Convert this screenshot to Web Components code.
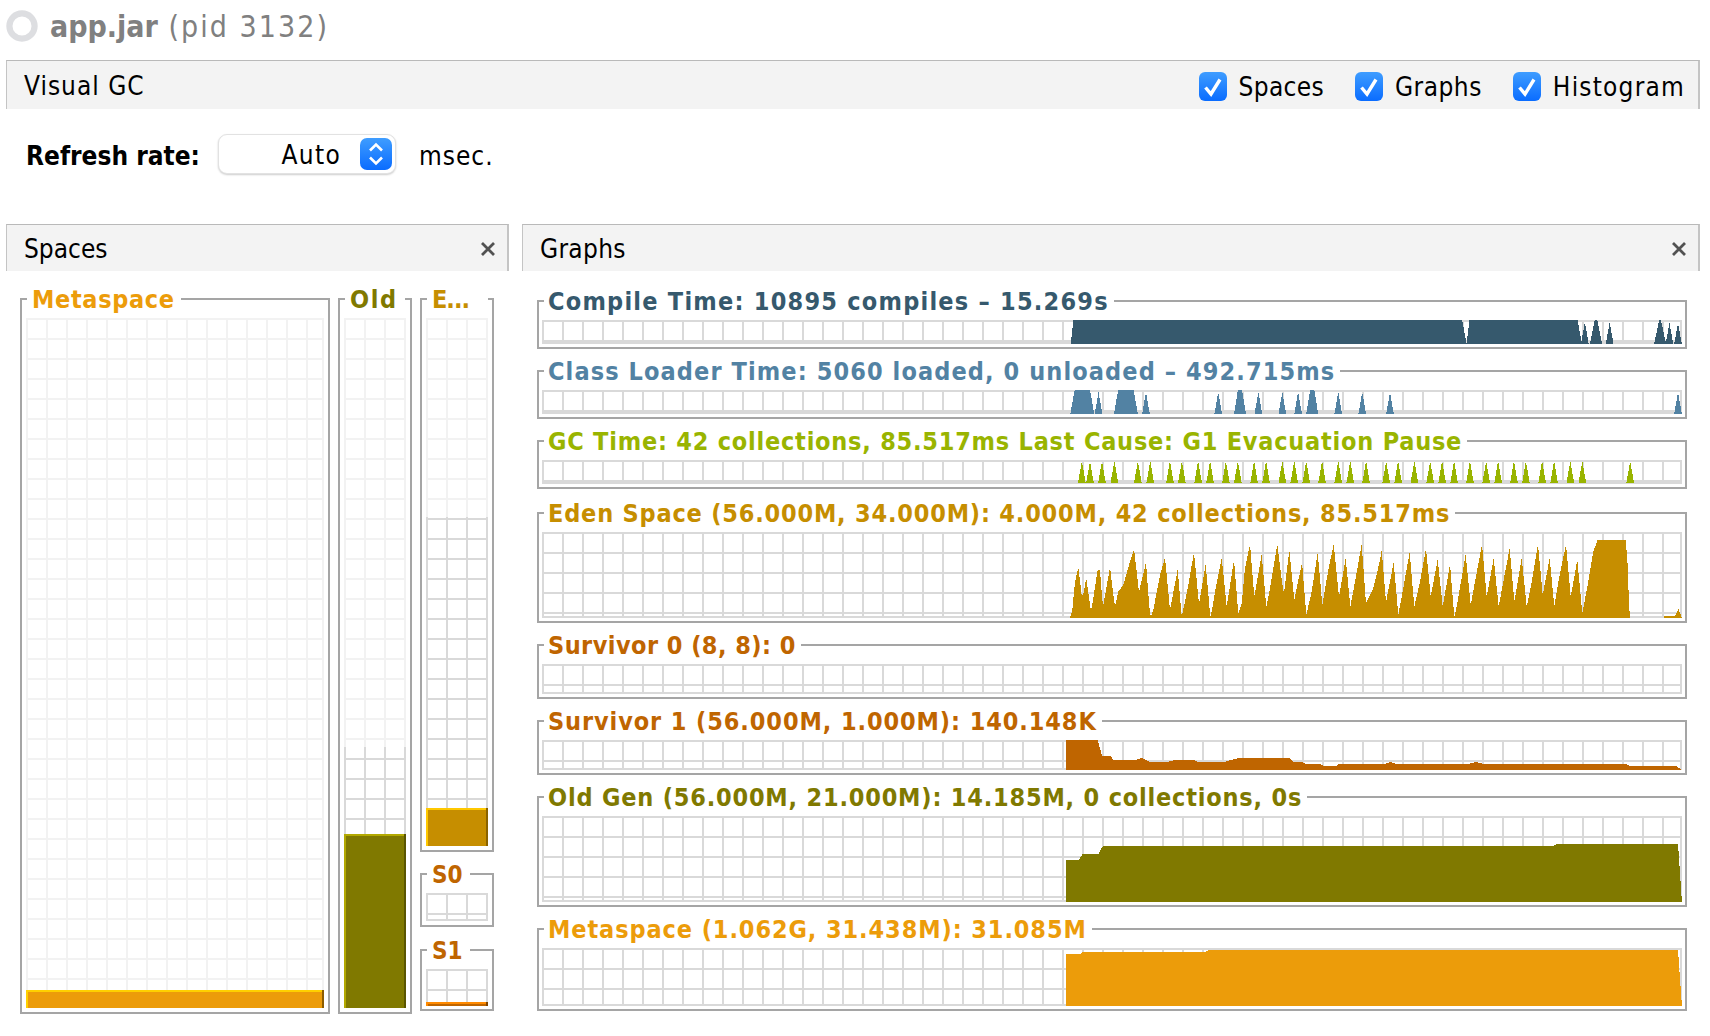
<!DOCTYPE html>
<html lang="en">
<head>
<meta charset="utf-8">
<title>Visual GC</title>
<style>
html,body{margin:0;padding:0;background:#fff}
body{font-family:"DejaVu Sans",sans-serif;font-stretch:condensed;width:1710px;height:1036px;overflow:hidden}
</style>
</head>
<body>
<vgc-app></vgc-app>
<script>
const FONT='"DejaVu Sans",sans-serif';
const zx=x=>+(1040+x/2.34).toFixed(1);
function gridRects(x0,y0,w,h,color,stepX=20,stepY=20,bottom=true,right=true){
  let s='';
  for(let x=x0;x<x0+w-1;x+=stepX)s+=`<rect x="${x}" y="${y0}" width="2" height="${h}"/>`;
  for(let y=y0;y<y0+h-1;y+=stepY)s+=`<rect x="${x0}" y="${y}" width="${w}" height="2"/>`;
  if(right)s+=`<rect x="${x0+w-2}" y="${y0}" width="2" height="${h}"/>`;
  if(bottom)s+=`<rect x="${x0}" y="${y0+h-2}" width="${w}" height="2"/>`;
  return `<g fill="${color}">${s}</g>`;
}
class BaseEl extends HTMLElement{
  constructor(){super();this.attachShadow({mode:'open'});}
}
class AppTitle extends BaseEl{connectedCallback(){this.shadowRoot.innerHTML=`<style>
:host{display:flex;align-items:center;height:60px;padding-left:6px;box-sizing:border-box;color:#808080;font:condensed 30px ${FONT};gap:12px;padding-bottom:8px}
svg{flex:none;width:32px;height:32px}
b{font-weight:700;letter-spacing:0}
span{white-space:pre;letter-spacing:2.05px}
</style><svg viewBox="0 0 32 32"><circle cx="16" cy="16" r="12.6" fill="none" stroke="#dddee1" stroke-width="6.2"/></svg><span><b>app.jar</b> (pid 3132)</span>`;}}
class TabBar extends BaseEl{connectedCallback(){const closable=this.hasAttribute('closable');const ls=this.getAttribute('ls')||0;this.shadowRoot.innerHTML=`<style>
:host{display:flex;align-items:center;box-sizing:border-box;background:#f3f3f3;border-top:1px solid #b9b9b9;border-left:1px solid #c4c4c4;border-right:2px solid #c4c4c4;padding-left:17px;padding-right:11px;font-size:26px;font-stretch:condensed;color:#000;height:var(--tab-h,49px)}
.t{flex:1;letter-spacing:${ls}px;padding-top:2px}
.a{display:flex;align-items:center}
svg{width:16px;height:16px;display:block;margin-top:2px}
</style><div class="t"><slot></slot></div><div class="a"><slot name="actions"></slot>${closable?'<svg viewBox="0 0 16 16"><path d="M2 2L14 14M14 2L2 14" stroke="#515151" stroke-width="2.8" fill="none"/></svg>':''}</div>`;}}
class CheckBox extends BaseEl{connectedCallback(){const ls=this.getAttribute('ls')||0;this.shadowRoot.innerHTML=`<style>
:host{display:inline-flex;align-items:center;gap:12px;font-size:26px;font-stretch:condensed;color:#000}
span{letter-spacing:${ls}px}
i{display:block;width:28px;height:29px;border-radius:6px;background:linear-gradient(#3f9dff,#0a6cff)}
svg{display:block;width:28px;height:29px}
</style><i><svg viewBox="0 0 28 29"><path d="M6.5 15.5L12 22L21 7.5" fill="none" stroke="#fff" stroke-width="3.4"/></svg></i><span><slot></slot></span>`;}}
class SelectBox extends BaseEl{connectedCallback(){this.shadowRoot.innerHTML=`<style>
:host{display:flex;align-items:center;justify-content:flex-end;box-sizing:border-box;width:178px;height:40px;border:1px solid #e2e2e2;border-radius:9px;background:#fff;box-shadow:0 1px 2px rgba(0,0,0,.2);padding-right:3px;gap:19px;font-size:26px;font-stretch:condensed;color:#000}
span{letter-spacing:1.3px;margin-top:1px}
i{display:block;width:32px;height:32px;border-radius:7px;background:linear-gradient(#3f9dff,#0a6cff)}
svg{display:block;width:32px;height:32px}
</style><span><slot></slot></span><i><svg viewBox="0 0 32 32"><path d="M10 12.5L16 6.5L22 12.5M10 19.5L16 25.5L22 19.5" fill="none" stroke="#fff" stroke-width="2.6"/></svg></i>`;}}
class FrameBox extends BaseEl{
  frame(o){
    this.shadowRoot.innerHTML=`<style>
:host{display:block;flex:none;margin-top:${o.mt||0}px}
fieldset{margin:0;min-width:0;box-sizing:border-box;border:2px solid #a5a5a5;padding:${o.pt}px ${o.px}px ${o.pb}px;display:block}
legend{margin-left:${o.ml}px;padding:0 ${o.lr}px 0 ${o.ll}px;height:26px;font:condensed 700 ${o.fs||25}px/28px ${FONT};color:${o.color};white-space:nowrap;letter-spacing:${o.ls||0}px}
svg{display:block}
</style><fieldset><legend>${o.label}</legend>${o.svg}</fieldset>`;
  }
}
class SpaceBox extends FrameBox{connectedCallback(){
  const g=n=>this.getAttribute(n), w=+g('w'), h=+g('h'), solid=+(g('solid')||0), fill=+g('fill'), c=(g('colors')||'').split(',');
  let s='';
  if(solid<h){
    if(solid>0)s+=gridRects(0,0,w,h,'#f2f2f2',20,20,false,true);
    s+=`<svg x="0" y="${solid}" width="${w}" height="${h-solid}" viewBox="0 ${solid} ${w} ${h-solid}">${gridRects(0,0,w,h,'#d9d9d9',20,20,g('bl')!==null,true)}</svg>`;
  }else s+=gridRects(0,0,w,h,'#f2f2f2',20,20,false,true);
  const fy=h-fill;
  if(fill>0)s+=`<rect x="0" y="${fy}" width="${w}" height="${fill}" fill="${c[0]}"/><rect x="0" y="${fy}" width="2" height="${fill}" fill="${c[1]}"/><rect x="0" y="${fy}" width="${w}" height="2" fill="${c[1]}"/><rect x="${w-2}" y="${fy}" width="2" height="${fill}" fill="${c[2]}"/>`;
  this.frame({mt:g('mt'),pt:6,px:4,pb:+(g('pb')||4),ml:1,ll:5,lr:+(g('lr')||6),label:g('label'),color:g('color'),ls:g('ls'),fs:g('fs'),
    svg:`<svg width="${w}" height="${h}" viewBox="0 0 ${w} ${h}" shape-rendering="crispEdges">${s}</svg>`});
}}
const teeth=(list,base,top,hw=9)=>list.map(a=>{
  const [x,t=top,f=0,wd=hw]=Array.isArray(a)?a:[a];
  return [[x-wd,base],[x-f,t],[x+f,t],[x+wd,base]];
});
const edenA=[[15,278],[22,255],[30,170],[40,127],[50,210],[54,212],[64,160],[75,240],[78,258],[85,220],[98,133],[105,135],[112,225],[115,240],[135,127],[147,225],[150,245],[160,200],[175,180],[192,120],[207,72],[222,200],[243,112],[253,245],[257,275],[265,255],[285,150],[300,97],[315,255],[338,133],[350,275],[353,262],[368,190],[387,82],[402,238],[422,118],[436,275],[440,260],[452,190],[470,98],[485,245],[507,105],[520,265],[530,235],[540,130],[555,58],[568,215],[590,88],[604,245],[615,190],[637,57],[652,178],[657,205],[673,75],[688,225],[711,112],[724,270],[740,200],[758,82],[772,240],[790,135],[806,58],[822,215],[842,100],[856,245],[870,170],[890,58],[903,235],[925,190],[945,105]].map(([x,y])=>[1065+x/3,525+y/3]);
const edenB=[[20,75],[33,232],[56,112],[70,270],[80,215],[104,82],[118,245],[135,170],[153,70],[167,215],[188,103],[203,245],[225,118],[238,275],[245,245],[272,88],[287,240],[300,170],[321,58],[335,215],[356,100],[371,245],[385,170],[404,70],[418,230],[440,100],[455,245],[470,170],[489,58],[503,210],[524,100],[538,245],[550,170],[573,58],[587,215],[607,105],[622,265],[640,170],[655,80],[668,45],[752,45],[758,120],[762,240],[765,278]].map(([x,y])=>[1375+x/3,525+y/3]);
const edenC=[[867,278],[868,274],[900,272],[910,252],[921,278]].map(([x,y])=>[1375+x/3,525+y/3]);
const CHARTS={
  compile:{y:320,h:24,color:'#36596d',shapes:[
    [[72,344],[78,320],[988,320],[998,343.5],[1005,320],[1258,320],[1268,344]],
    ...teeth([[1275,322,0,9],[1301,320,3,14],[1333,322,0,9],[1451,320,2,14],[1473,323,0,9],[1493,323,0,9]],344)]},
  classl:{y:390,h:24,color:'#5282a3',shapes:teeth([[99,390,18,28],[137,392,0,9],[201,390,18,28],[248,392,0,9],[417,392,0,9],[468,390,5,14],[511,392,0,9],[567,392,0,9],[604,392,0,9],[637,390,5,14],[698,392,0,9],[754,392,0,9],[819,392,0,9],[1493,392,0,9]],414)},
  gc:{y:461,h:24,color:'#99b400',shapes:teeth([98,117,145,174,229,258,304,332,370,398,435,463,501,529,567,595,623,660,698,726,763,810,838,876,913,941,969,1006,1044,1072,1109,1137,1175,1203,1241,1269,1381],484,462)},
  eden:{y:532,h:86,color:'#c68e00',raw:[[...edenA,...edenB],edenC]},
  s0:{y:664,h:30,color:'#bf6500',shapes:[]},
  s1:{y:740,h:30,color:'#bf6500',zoomY:[630,3],shapes:[
    [[60,419],[60,330],[135,330],[145,378],[165,378],[172,390],[225,390],[238,383],[255,395],[300,395],[315,390],[360,390],[370,396],[430,396],[465,384],[585,384],[592,395],[615,396],[620,401],[655,401],[665,408],[692,408],[700,402],[805,402],[820,396],[835,402],[1000,402],[1020,396],[1040,402],[1370,402],[1380,408],[1490,408],[1500,419]]]},
  old:{y:816,h:86,color:'#807900',zoomY:[630,3],shapes:[
    [[60,816],[60,690],[90,690],[100,672],[137,672],[147,648],[1200,648],[1210,642],[1493,642],[1502,816]]]},
  meta:{y:948,h:58,color:'#ec9c0a',zoomY:[630,3],shapes:[
    [[60,1128],[60,972],[95,972],[100,966],[385,966],[395,960],[1493,960],[1502,1128]]]}
};
class GraphBox extends FrameBox{connectedCallback(){
  const g=n=>this.getAttribute(n), c=CHARTS[g('chart')];
  const conv=c.zoomY?([x,y])=>`${zx(x)},${(c.zoomY[0]+y/c.zoomY[1]).toFixed(1)}`:([x,y])=>`${zx(x)},${y}`;
  const polys=c.raw
    ?c.raw.map(p=>`<polygon points="${p.map(([x,y])=>x.toFixed(1)+','+y.toFixed(1)).join(' ')}"/>`).join('')
    :c.shapes.map(p=>`<polygon points="${p.map(conv).join(' ')}"/>`).join('');
  this.frame({mt:g('mt')||0,pt:6,px:3,pb:3,ml:2,ll:4,lr:5,label:g('label'),color:c.color,ls:g('ls'),
    svg:`<svg width="1140" height="${c.h}" viewBox="542 ${c.y} 1140 ${c.h}" shape-rendering="crispEdges">${gridRects(542,c.y,1140,c.h,'#d9d9d9')}<g fill="${c.color}">${polys}</g></svg>`});
}}
class VgcApp extends BaseEl{connectedCallback(){this.shadowRoot.innerHTML=`<style>
:host{display:block;width:1710px;height:1036px;font-family:${FONT};font-stretch:condensed;box-sizing:border-box}
.bar{margin:0 10px 0 6px;--tab-h:49px}
.acts{display:flex;align-items:center;gap:0;margin:3px 2px 0 0}
check-box.a{margin-right:31px}
.refresh{display:flex;align-items:center;height:115px;box-sizing:border-box;padding:25px 0 50px 26px;font-size:26px;color:#000}
.refresh b{width:192px;flex:none;padding-top:3px}
.refresh span{margin-left:23px;letter-spacing:1px;padding-top:3px}
.panels{display:flex;gap:13px;padding:0 10px 0 6px}
.sp{width:503px;flex:none}
.gr{flex:1}
.tab{--tab-h:47px}
.spbody{display:flex;gap:8px;padding:15px 0 0 14px}
.col{display:flex;flex-direction:column;width:74px}
.grbody{display:flex;flex-direction:column;gap:9px;padding:17px 13px 0 15px}
</style>
<app-title></app-title>
<tab-bar class="bar" ls="1">Visual GC<div slot="actions" class="acts">
<check-box class="a" ls=".3">Spaces</check-box><check-box class="a" ls=".5">Graphs</check-box><check-box ls="1.2">Histogram</check-box></div></tab-bar>
<div class="refresh"><b>Refresh rate:</b><select-box>Auto</select-box><span>msec.</span></div>
<div class="panels">
 <section class="sp"><tab-bar class="tab" closable>Spaces</tab-bar>
  <div class="spbody">
   <space-box label="Metaspace" ls=".65" color="#ec9c0a" w="298" h="690" fill="18" solid="690" colors="#ec9c0a,#ffd000,#8c5c00"></space-box>
   <space-box label="Old" ls="1.6" lr="7" color="#807900" w="62" h="690" fill="174" solid="429" colors="#807900,#b3a900,#5a5500"></space-box>
   <div class="col">
    <space-box label="E..." ls="-1" lr="19" color="#c68e00" w="62" h="528" fill="38" solid="199" colors="#c68e00,#ffc800,#8a6300"></space-box>
    <space-box label="S0" fs="24" mt="9" lr="7" color="#bf6500" w="62" h="28" fill="0" solid="0" bl colors="#bf6500,#ff8a00,#804400"></space-box>
    <space-box label="S1" fs="24" mt="10" lr="7" pb="3" color="#bf6500" w="62" h="37" fill="4" solid="0" colors="#bf6500,#ff8a00,#804400"></space-box>
   </div>
  </div>
 </section>
 <section class="gr"><tab-bar class="tab" ls=".3" closable>Graphs</tab-bar>
  <div class="grbody">
   <graph-box chart="compile" ls="1.23" label="Compile Time: 10895 compiles – 15.269s"></graph-box>
   <graph-box chart="classl" ls="1.1" label="Class Loader Time: 5060 loaded, 0 unloaded – 492.715ms"></graph-box>
   <graph-box chart="gc" ls=".77" label="GC Time: 42 collections, 85.517ms Last Cause: G1 Evacuation Pause"></graph-box>
   <graph-box chart="eden" ls=".8" mt="2" label="Eden Space (56.000M, 34.000M): 4.000M, 42 collections, 85.517ms"></graph-box>
   <graph-box chart="s0" ls=".45" label="Survivor 0 (8, 8): 0"></graph-box>
   <graph-box chart="s1" ls=".9" label="Survivor 1 (56.000M, 1.000M): 140.148K"></graph-box>
   <graph-box chart="old" ls=".8" label="Old Gen (56.000M, 21.000M): 14.185M, 0 collections, 0s"></graph-box>
   <graph-box chart="meta" ls=".9" label="Metaspace (1.062G, 31.438M): 31.085M"></graph-box>
  </div>
 </section>
</div>`;}}
customElements.define('app-title',AppTitle);
customElements.define('tab-bar',TabBar);
customElements.define('check-box',CheckBox);
customElements.define('select-box',SelectBox);
customElements.define('space-box',SpaceBox);
customElements.define('graph-box',GraphBox);
customElements.define('vgc-app',VgcApp);
</script>
</body>
</html>
